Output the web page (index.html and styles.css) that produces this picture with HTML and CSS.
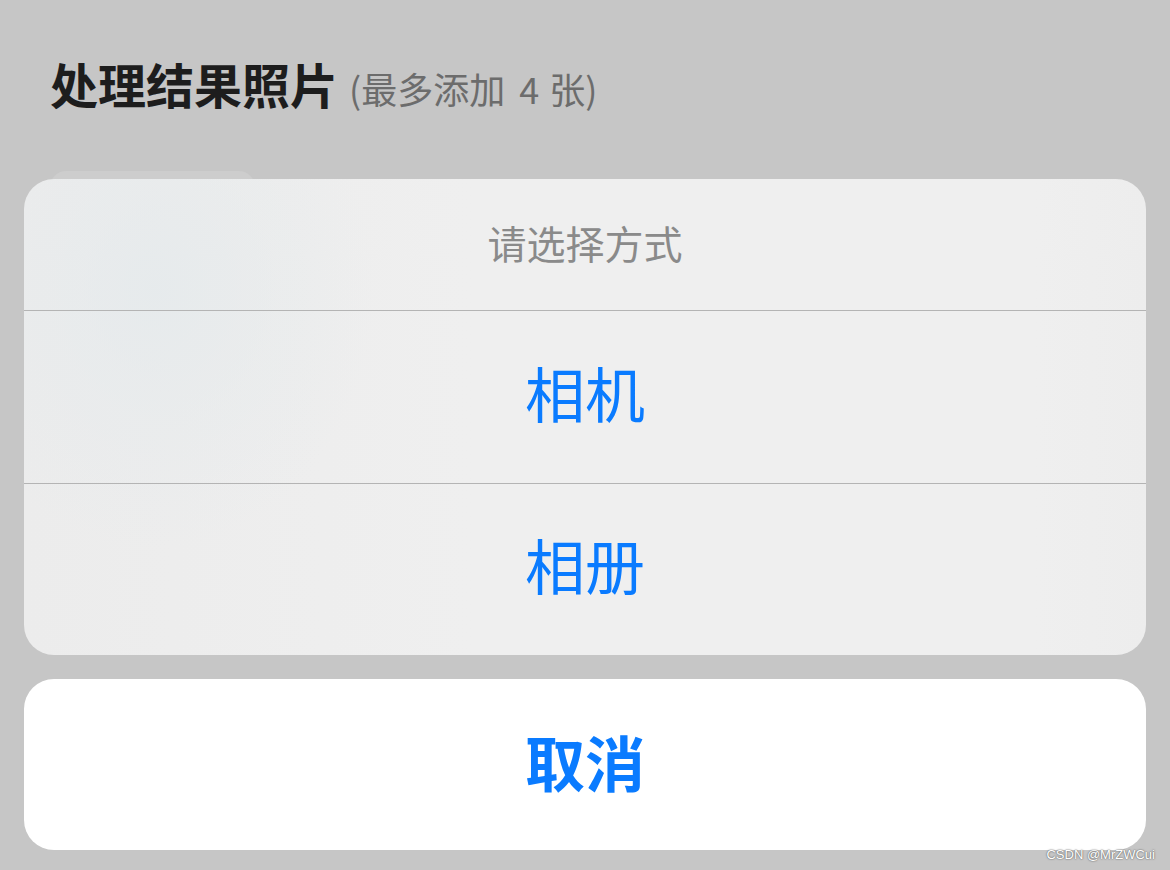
FILE: index.html
```html
<!DOCTYPE html>
<html lang="zh-CN">
<head>
<meta charset="utf-8">
<title>处理结果照片</title>
<link rel="stylesheet" href="styles.css">
</head>
<body>
<main class="page">
  <h1 class="title">处理结果照片<span class="sub">(最多添加<span class="num">4</span>张)</span></h1>
  <div class="thumb"></div>
</main>
<div class="overlay">
  <div class="sheet">
    <div class="sheet-title">请选择方式</div>
    <div class="sheet-item">相机</div>
    <div class="sheet-item">相册</div>
  </div>
  <div class="cancel">取消</div>
</div>
<div class="watermark">CSDN @MrZWCui</div>
</body>
</html>
```

FILE: styles.css
```css
* { box-sizing: border-box; }
html, body {
  margin: 0;
  padding: 0;
  width: 1170px;
  height: 870px;
  overflow: hidden;
  background: #c6c6c6;
  font-family: "Noto Sans CJK SC", "Noto Sans", sans-serif;
}
.page {
  padding: 59px 0 0 50px;
}
.title {
  margin: 0;
  font-size: 48px;
  line-height: 48px;
  font-weight: 700;
  color: #1d1d1d;
}
.sub {
  font-size: 36px;
  font-weight: 400;
  color: #6c6c6c;
  margin-left: 11px;
}
.num {
  margin: 0 10px 0 14px;
}
.thumb {
  margin-top: 59px;
  width: 205px;
  height: 205px;
  border-radius: 16px;
  background: #cdcdcd;
}
.overlay {
  position: absolute;
  left: 24px;
  right: 24px;
  top: 179px;
  display: flex;
  flex-direction: column;
  gap: 24px;
}
.sheet {
  border-radius: 30px;
  overflow: hidden;
  background:
    radial-gradient(ellipse 220px 260px at 130px 110px, rgba(229, 234, 236, 0.85), rgba(229, 234, 236, 0) 100%),
    linear-gradient(90deg, #ececec 0%, #efefef 40%, #efefef 90%, #ededed 100%);
}
.sheet-title {
  height: 132px;
  display: flex;
  align-items: center;
  justify-content: center;
  font-size: 39px;
  color: #8a8a8a;
  padding-bottom: 5px;
  border-bottom: 1px solid #b4b4b4;
}
.sheet-item {
  height: 172px;
  display: flex;
  align-items: center;
  justify-content: center;
  font-size: 60px;
  color: #0a7bff;
  padding-bottom: 12px;
}
.sheet-item + .sheet-item {
  border-top: 1px solid #b4b4b4;
}
.cancel {
  height: 171px;
  border-radius: 30px;
  background: #ffffff;
  display: flex;
  align-items: center;
  justify-content: center;
  font-size: 60px;
  font-weight: 700;
  color: #0a7bff;
  padding-bottom: 8px;
}
.watermark {
  position: absolute;
  right: 15px;
  bottom: 8px;
  font-family: "Liberation Sans", Arial, sans-serif;
  font-size: 13px;
  color: #ffffff;
  text-shadow: 0 0 2px #666, 0 0 1px #666;
}
```
